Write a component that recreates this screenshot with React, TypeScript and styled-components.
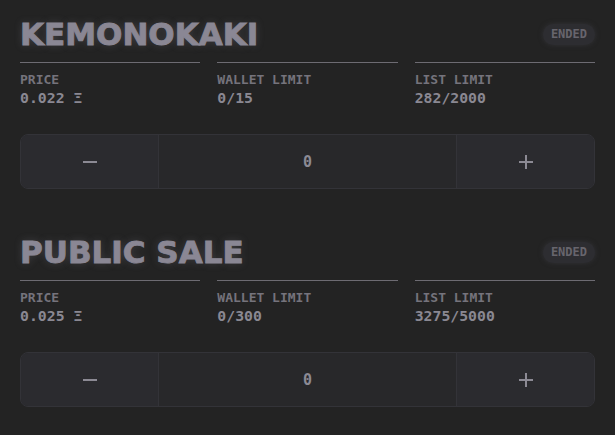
import React from 'react'
import { styled, createGlobalStyle } from 'styled-components'

const GlobalStyle = createGlobalStyle`
  html, body {
    margin: 0;
    padding: 0;
    background: #232323;
  }
`

type Phase = {
  title: string
  price: string
  wallet: string
  list: string
}

const phases: Phase[] = [
  { title: 'KEMONOKAKI', price: '0.022 Ξ', wallet: '0/15', list: '282/2000' },
  { title: 'PUBLIC SALE', price: '0.025 Ξ', wallet: '0/300', list: '3275/5000' },
]

const MinusIcon = () => (
  <svg width="16" height="16" viewBox="0 0 16 16">
    <rect x="1" y="7" width="14" height="2" fill="currentColor" />
  </svg>
)

const PlusIcon = () => (
  <svg width="16" height="16" viewBox="0 0 16 16">
    <rect x="1" y="7" width="14" height="2" fill="currentColor" />
    <rect x="7" y="1" width="2" height="14" fill="currentColor" />
  </svg>
)

const SaleBlock: React.FC<Phase> = (props) => {
  return (
    <Section>
      <Header>
        <Title>{props.title}</Title>
        <Badge>ENDED</Badge>
      </Header>
      <Stats>
        <Stat>
          <Label>PRICE</Label>
          <Value>{props.price}</Value>
        </Stat>
        <Stat>
          <Label>WALLET LIMIT</Label>
          <Value>{props.wallet}</Value>
        </Stat>
        <Stat>
          <Label>LIST LIMIT</Label>
          <Value>{props.list}</Value>
        </Stat>
      </Stats>
      <Stepper>
        <StepButton><MinusIcon /></StepButton>
        <Count>0</Count>
        <StepButton><PlusIcon /></StepButton>
      </Stepper>
    </Section>
  )
}

export default function App() {
  return (
    <>
      <GlobalStyle />
      <Page>
        {phases.map((p) => <SaleBlock key={p.title} {...p} />)}
      </Page>
    </>
  )
}

const Page = styled.div`
  display: flex;
  flex-direction: column;
  gap: 46px;
  padding: 17px 20px 0 20px;
  width: 615px;
  box-sizing: border-box;
`

const Section = styled.div`
  display: flex;
  flex-direction: column;
`

const Header = styled.div`
  display: flex;
  align-items: center;
  justify-content: space-between;
  height: 34px;
`

const Title = styled.h1`
  margin: 0;
  font-family: 'DejaVu Sans', sans-serif;
  font-weight: 900;
  font-size: 31px;
  line-height: 1;
  color: #8a8794;
  letter-spacing: 0;
  -webkit-text-stroke: 0.9px #8a8794;
  text-shadow: 0 0 8px rgba(138, 135, 148, 0.3);
`

const Badge = styled.span`
  font-family: 'DejaVu Sans Mono', monospace;
  font-weight: bold;
  font-size: 12px;
  line-height: 13px;
  color: #67656d;
  background: #2d2d31;
  border-radius: 11px;
  padding: 4px 8px;
  box-shadow: 0 0 5px rgba(60, 60, 66, 0.6);
`

const Stats = styled.div`
  display: grid;
  grid-template-columns: repeat(3, 1fr);
  gap: 17px;
  margin-top: 11px;
`

const Stat = styled.div`
  display: flex;
  flex-direction: column;
  border-top: 1px solid #6d6b72;
  padding-top: 9px;
  font-family: 'DejaVu Sans Mono', monospace;
`

const Label = styled.span`
  font-size: 13px;
  font-weight: bold;
  color: #75737c;
  line-height: 16px;
`

const Value = styled.span`
  font-size: 14.8px;
  font-weight: bold;
  color: #8a8892;
  line-height: 19px;
`

const Stepper = styled.div`
  display: grid;
  grid-template-columns: 137px 1fr 137px;
  height: 55px;
  box-sizing: border-box;
  margin-top: 27px;
  border: 1px solid #333338;
  border-radius: 8px;
  overflow: hidden;
  background: #28282a;
`

const StepButton = styled.div`
  display: flex;
  align-items: center;
  justify-content: center;
  background: #2b2b2f;
  color: #8c8a94;
`

const Count = styled.div`
  display: flex;
  align-items: center;
  justify-content: center;
  border-left: 1px solid #333338;
  border-right: 1px solid #333338;
  font-family: 'DejaVu Sans Mono', monospace;
  font-weight: bold;
  font-size: 15px;
  color: #8c8a94;
`
